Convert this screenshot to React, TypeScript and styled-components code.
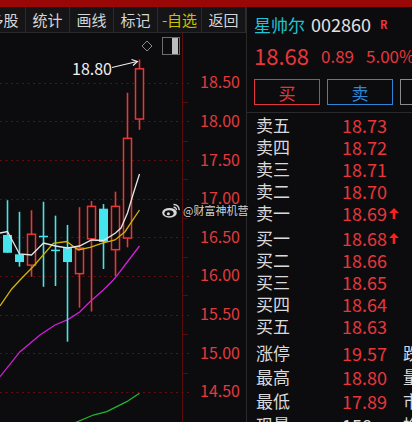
import React from 'react';
import styled, { createGlobalStyle } from 'styled-components';

const GlobalStyle = createGlobalStyle`
  html, body {
    margin: 0;
    padding: 0;
    background: #0c0c0e;
  }
  body {
    font-family: "Noto Sans CJK SC", "Noto Sans", sans-serif;
    overflow: hidden;
  }
`;

// 行情数据
const RED = '#e8363b';
const CYAN = '#46e4ec';
const BG = '#0c0c0e';

const PRICE_TOP = 18.5;
const Y_TOP = 82.7;
const PX_PER_YUAN = 77.3;
const yOf = (p: number) => Y_TOP + (PRICE_TOP - p) * PX_PER_YUAN;

const levels = [18.5, 18, 17.5, 17, 16.5, 16, 15.5, 15, 14.5];

// [open, close, high, low]
const candles: [number, number, number, number][] = [
  [16.53, 16.3, 16.98, 16.3],
  [16.28, 16.18, 16.83, 16.12],
  [16.14, 16.54, 16.85, 15.99],
  [16.52, 16.515, 16.96, 15.86],
  [16.34, 16.335, 16.78, 15.87],
  [16.36, 16.18, 16.66, 15.15],
  [16.03, 16.36, 16.89, 15.59],
  [16.48, 16.9, 16.97, 15.54],
  [16.87, 16.44, 16.93, 16.09],
  [16.34, 16.9, 17.09, 16.0],
  [16.49, 17.78, 18.37, 16.37],
  [18.03, 18.68, 18.8, 17.89],
];

const ma5 = '0,233 7.5,231.5 19.5,254 31.5,255 43.5,243 55.5,246 67.5,248 79.5,246 91.5,240 103.5,240.5 115.5,233 121,228 127.5,213 133.5,193 139.5,174';
const ma10 = '0,306 11.7,289 20,280 33,266.7 53.3,243.3 66.7,241.5 78.3,250 90,247.3 101.7,243.3 115,240 125,231.7 131.7,221.7 139.5,210';
const ma20 = '0,376.7 20,351.7 40,335 55,325 68.3,319.3 80,311.7 90,301.7 103.3,290 113.3,280 120,271.7 125,265 139.5,246';
const ma60 = '70,425 76.7,422 93.3,415 106.7,411.7 126.7,401.7 139.5,393.3';

const tools = [
  { label: '多股' },
  { label: '统计' },
  { label: '画线' },
  { label: '标记' },
  { label: '-自选', accent: true },
  { label: '返回' },
];

const asks = [
  { label: '卖五', price: '18.73' },
  { label: '卖四', price: '18.72' },
  { label: '卖三', price: '18.71' },
  { label: '卖二', price: '18.70' },
  { label: '卖一', price: '18.69', up: true },
];

const bids = [
  { label: '买一', price: '18.68', up: true },
  { label: '买二', price: '18.66' },
  { label: '买三', price: '18.65' },
  { label: '买四', price: '18.64' },
  { label: '买五', price: '18.63' },
];

const stats = [
  { label: '涨停', value: '19.57', side: '跌停' },
  { label: '最高', value: '18.80', side: '量比' },
  { label: '最低', value: '17.89', side: '市盈' },
  { label: '现量', value: '158', side: '换手', plain: true },
];

const buyVolume = 42;
const sellVolume = 58;

const Screen = styled.div`
  position: relative;
  width: 412px;
  height: 422px;
  display: flex;
  flex-direction: column;
  background: ${BG};
  overflow: hidden;
`;

const TopBar = styled.div`
  height: 7px;
  flex-shrink: 0;
  background: #9a0707;
`;

const Body = styled.div`
  flex: 1;
  display: flex;
  min-height: 0;
`;

const ChartPane = styled.div`
  width: 246px;
  flex-shrink: 0;
  display: flex;
  flex-direction: column;
  overflow: hidden;
`;

const Toolbar = styled.div`
  height: 25px;
  flex-shrink: 0;
  display: flex;
  overflow: hidden;
  background: #151517;
  border-bottom: 1px solid #2a2a2c;
`;

const ToolStrip = styled.div`
  display: flex;
  margin-left: -18px;
`;

const ToolItem = styled.div<{ $accent?: boolean }>`
  width: 43px;
  flex-shrink: 0;
  display: flex;
  align-items: center;
  justify-content: center;
  border-right: 1px solid #2c2c2e;
  font-size: 15px;
  color: ${(p) => (p.$accent ? '#c9c200' : '#d6d6d6')};
  white-space: nowrap;
`;

const ChartSvg = styled.svg`
  display: block;
  flex-shrink: 0;
`;

const QuotePane = styled.div`
  flex: 1;
  display: flex;
  flex-direction: column;
  border-left: 1px solid #2a2a2c;
  overflow: hidden;
  white-space: nowrap;
`;

const Header = styled.div`
  padding: 0 0 7px 7px;
  border-bottom: 1px solid #2a2a2c;
`;

const NameRow = styled.div`
  height: 34px;
  display: flex;
  align-items: center;
`;

const StockName = styled.span`
  font-size: 17px;
  color: #1fc4d6;
`;

const StockCode = styled.span`
  margin-left: 6px;
  font-size: 18px;
  color: #e2e2e2;
`;

const Badge = styled.span`
  align-self: flex-start;
  margin: 9px 0 0 9px;
  font-size: 11px;
  font-weight: 700;
  color: ${RED};
`;

const PriceRow = styled.div`
  height: 28px;
  display: flex;
  align-items: center;
  color: ${RED};
`;

const LastPrice = styled.span`
  font-size: 22px;
`;

const Change = styled.span`
  margin-left: 12px;
  font-size: 17px;
`;

const ButtonRow = styled.div`
  margin-top: 10px;
  display: flex;
  gap: 7px;
`;

const TradeButton = styled.div<{ $color: string }>`
  width: 66px;
  height: 26px;
  flex-shrink: 0;
  box-sizing: border-box;
  display: flex;
  align-items: center;
  justify-content: center;
  border: 1px solid ${(p) => p.$color};
  color: ${(p) => p.$color};
  font-size: 17px;
`;

const Book = styled.div<{ $pad: string }>`
  padding: ${(p) => p.$pad};
`;

const BookRow = styled.div<{ $height: number; $valueCol: number }>`
  height: ${(p) => p.$height}px;
  display: grid;
  grid-template-columns: 86px ${(p) => p.$valueCol}px auto;
  align-items: center;
  padding-left: 9px;
  line-height: ${(p) => p.$height}px;
`;

const RowLabel = styled.span`
  font-size: 17px;
  color: #dadada;
`;

const RowValue = styled.span<{ $plain?: boolean }>`
  font-size: 18px;
  color: ${(p) => (p.$plain ? '#dadada' : RED)};
`;

const RatioBar = styled.div`
  height: 2px;
  display: flex;
  background: #2a6aa2;
`;

const RatioFill = styled.div`
  height: 100%;
  background: #b27428;
`;

const Divider = styled.div`
  height: 1px;
  background: #2a2a2c;
`;

const Watermark = styled.div`
  position: absolute;
  left: 162px;
  top: 202px;
  display: flex;
  align-items: center;
  gap: 3px;
  font-size: 11px;
  line-height: 16px;
  color: #d2d2d2;
  text-shadow: 0 0 2px #000;
  pointer-events: none;
`;

const UpArrow = () => (
  <svg width="10" height="11" viewBox="0 0 10 11">
    <path d="M5 0 L10 5 L6.3 5 L6.3 11 L3.7 11 L3.7 5 L0 5 Z" fill="#ff1e1e" />
  </svg>
);

const WeiboLogo = () => (
  <svg width="18" height="15" viewBox="0 0 18 15">
    <ellipse cx="7.5" cy="9.8" rx="7.3" ry="4.9" fill="#d8d8d8" />
    <ellipse cx="7" cy="10.3" rx="4.6" ry="3" fill={BG} />
    <circle cx="6.4" cy="10.8" r="1.5" fill="#d8d8d8" />
    <path d="M11.5 1.5 a5.2 5.2 0 0 1 5.6 5.6" stroke="#d8d8d8" strokeWidth="1.4" fill="none" />
    <path d="M11.6 4.3 a2.5 2.5 0 0 1 2.8 2.8" stroke="#d8d8d8" strokeWidth="1.3" fill="none" />
  </svg>
);

const KChart = () => {
  const crisp = (v: number) => Math.round(v) + 0.5;
  return (
    <ChartSvg viewBox="0 33 246 389" width="246" height="389">
      {/* 价格网格 */}
      {levels.map((p) => (
        <line
          key={p}
          x1="0"
          x2="190"
          y1={crisp(yOf(p))}
          y2={crisp(yOf(p))}
          stroke="#6a0c0c"
          strokeDasharray="2 3.5"
        />
      ))}
      <line x1="182.5" x2="182.5" y1="33" y2="422" stroke="#5c0b0b" />
      {levels.slice(0, -1).map((p) => (
        <line key={p} x1="182" x2="188" y1={crisp(yOf(p - 0.25))} y2={crisp(yOf(p - 0.25))} stroke="#5c0b0b" />
      ))}
      {levels.map((p) => (
        <text
          key={p}
          x="240"
          y={yOf(p) + 5.5}
          textAnchor="end"
          fontSize="16"
          fontFamily='"Noto Sans CJK SC", sans-serif'
          fill="#e33a3c"
        >
          {p.toFixed(2)}
        </text>
      ))}

      {/* 均线 */}
      <polyline points={ma60} fill="none" stroke="#1fb62e" strokeWidth="1.3" />
      <polyline points={ma20} fill="none" stroke="#d41fd8" strokeWidth="1.3" />

      {/* K线 */}
      {candles.map(([open, close, high, low], i) => {
        const cx = 7.5 + i * 12;
        const rise = close > open;
        const color = rise ? RED : CYAN;
        const top = yOf(Math.max(open, close));
        const bottom = yOf(Math.min(open, close));
        const h = Math.max(1.5, bottom - top);
        return (
          <g key={i}>
            <line x1={cx} x2={cx} y1={yOf(high)} y2={yOf(low)} stroke={color} strokeWidth="1.6" />
            {rise ? (
              <rect x={cx - 4} y={top} width="8" height={h} fill={BG} stroke={RED} strokeWidth="1.5" />
            ) : (
              <rect x={cx - 4.5} y={top} width="9" height={h} fill={CYAN} />
            )}
          </g>
        );
      })}

      <polyline points={ma10} fill="none" stroke="#d2b400" strokeWidth="1.3" />
      <polyline points={ma5} fill="none" stroke="#e6e6e6" strokeWidth="1.3" />

      {/* 最高价标注 */}
      <text x="72" y="74.5" fontSize="16" fontFamily='"Noto Sans CJK SC", sans-serif' fill="#f0f0f0">
        18.80
      </text>
      <line x1="112" y1="67.5" x2="137" y2="61.5" stroke="#f0f0f0" strokeWidth="1.1" />
      <polyline points="131.5,59.5 137.5,61.4 133,65.5" fill="none" stroke="#f0f0f0" strokeWidth="1.1" />

      {/* 右上角工具 */}
      <path d="M147 41 L152 46 L147 51 L142 46 Z" fill="none" stroke="#8a8a8a" />
      <rect x="162.5" y="37.5" width="17" height="17" fill="none" stroke="#6e6e6e" />
      <rect x="172" y="38" width="6" height="16" fill="#bdbdbd" />
    </ChartSvg>
  );
};

const App: React.FC = () => {
  const buyShare = (buyVolume / (buyVolume + sellVolume)) * 100;
  return (
    <>
      <GlobalStyle />
      <Screen>
        <TopBar />
        <Body>
          <ChartPane>
            <Toolbar>
              <ToolStrip>
                {tools.map((t) => (
                  <ToolItem key={t.label} $accent={t.accent}>
                    {t.label}
                  </ToolItem>
                ))}
              </ToolStrip>
            </Toolbar>
            <KChart />
          </ChartPane>

          <QuotePane>
            <Header>
              <NameRow>
                <StockName>星帅尔</StockName>
                <StockCode>002860</StockCode>
                <Badge>R</Badge>
              </NameRow>
              <PriceRow>
                <LastPrice>18.68</LastPrice>
                <Change>0.89</Change>
                <Change>5.00%</Change>
              </PriceRow>
              <ButtonRow>
                <TradeButton $color="#e0383c">买</TradeButton>
                <TradeButton $color="#2f86d6">卖</TradeButton>
                <TradeButton $color="#8a8a8a" />
              </ButtonRow>
            </Header>

            <Book $pad="1px 0 3px">
              {asks.map((r) => (
                <BookRow key={r.label} $height={22} $valueCol={47}>
                  <RowLabel>{r.label}</RowLabel>
                  <RowValue>{r.price}</RowValue>
                  {r.up ? <UpArrow /> : <span />}
                </BookRow>
              ))}
            </Book>
            <RatioBar>
              <RatioFill style={{ width: `${buyShare}%` }} />
            </RatioBar>
            <Book $pad="0 0 2px">
              {bids.map((r) => (
                <BookRow key={r.label} $height={22} $valueCol={47}>
                  <RowLabel>{r.label}</RowLabel>
                  <RowValue>{r.price}</RowValue>
                  {r.up ? <UpArrow /> : <span />}
                </BookRow>
              ))}
            </Book>
            <Divider />
            <Book $pad="2px 0 0">
              {stats.map((r) => (
                <BookRow key={r.label} $height={24} $valueCol={61}>
                  <RowLabel>{r.label}</RowLabel>
                  <RowValue $plain={r.plain}>{r.value}</RowValue>
                  <RowLabel>{r.side}</RowLabel>
                </BookRow>
              ))}
            </Book>
          </QuotePane>
        </Body>

        <Watermark>
          <WeiboLogo />
          <span>@财富神机营</span>
        </Watermark>
      </Screen>
    </>
  );
};

export default App;
